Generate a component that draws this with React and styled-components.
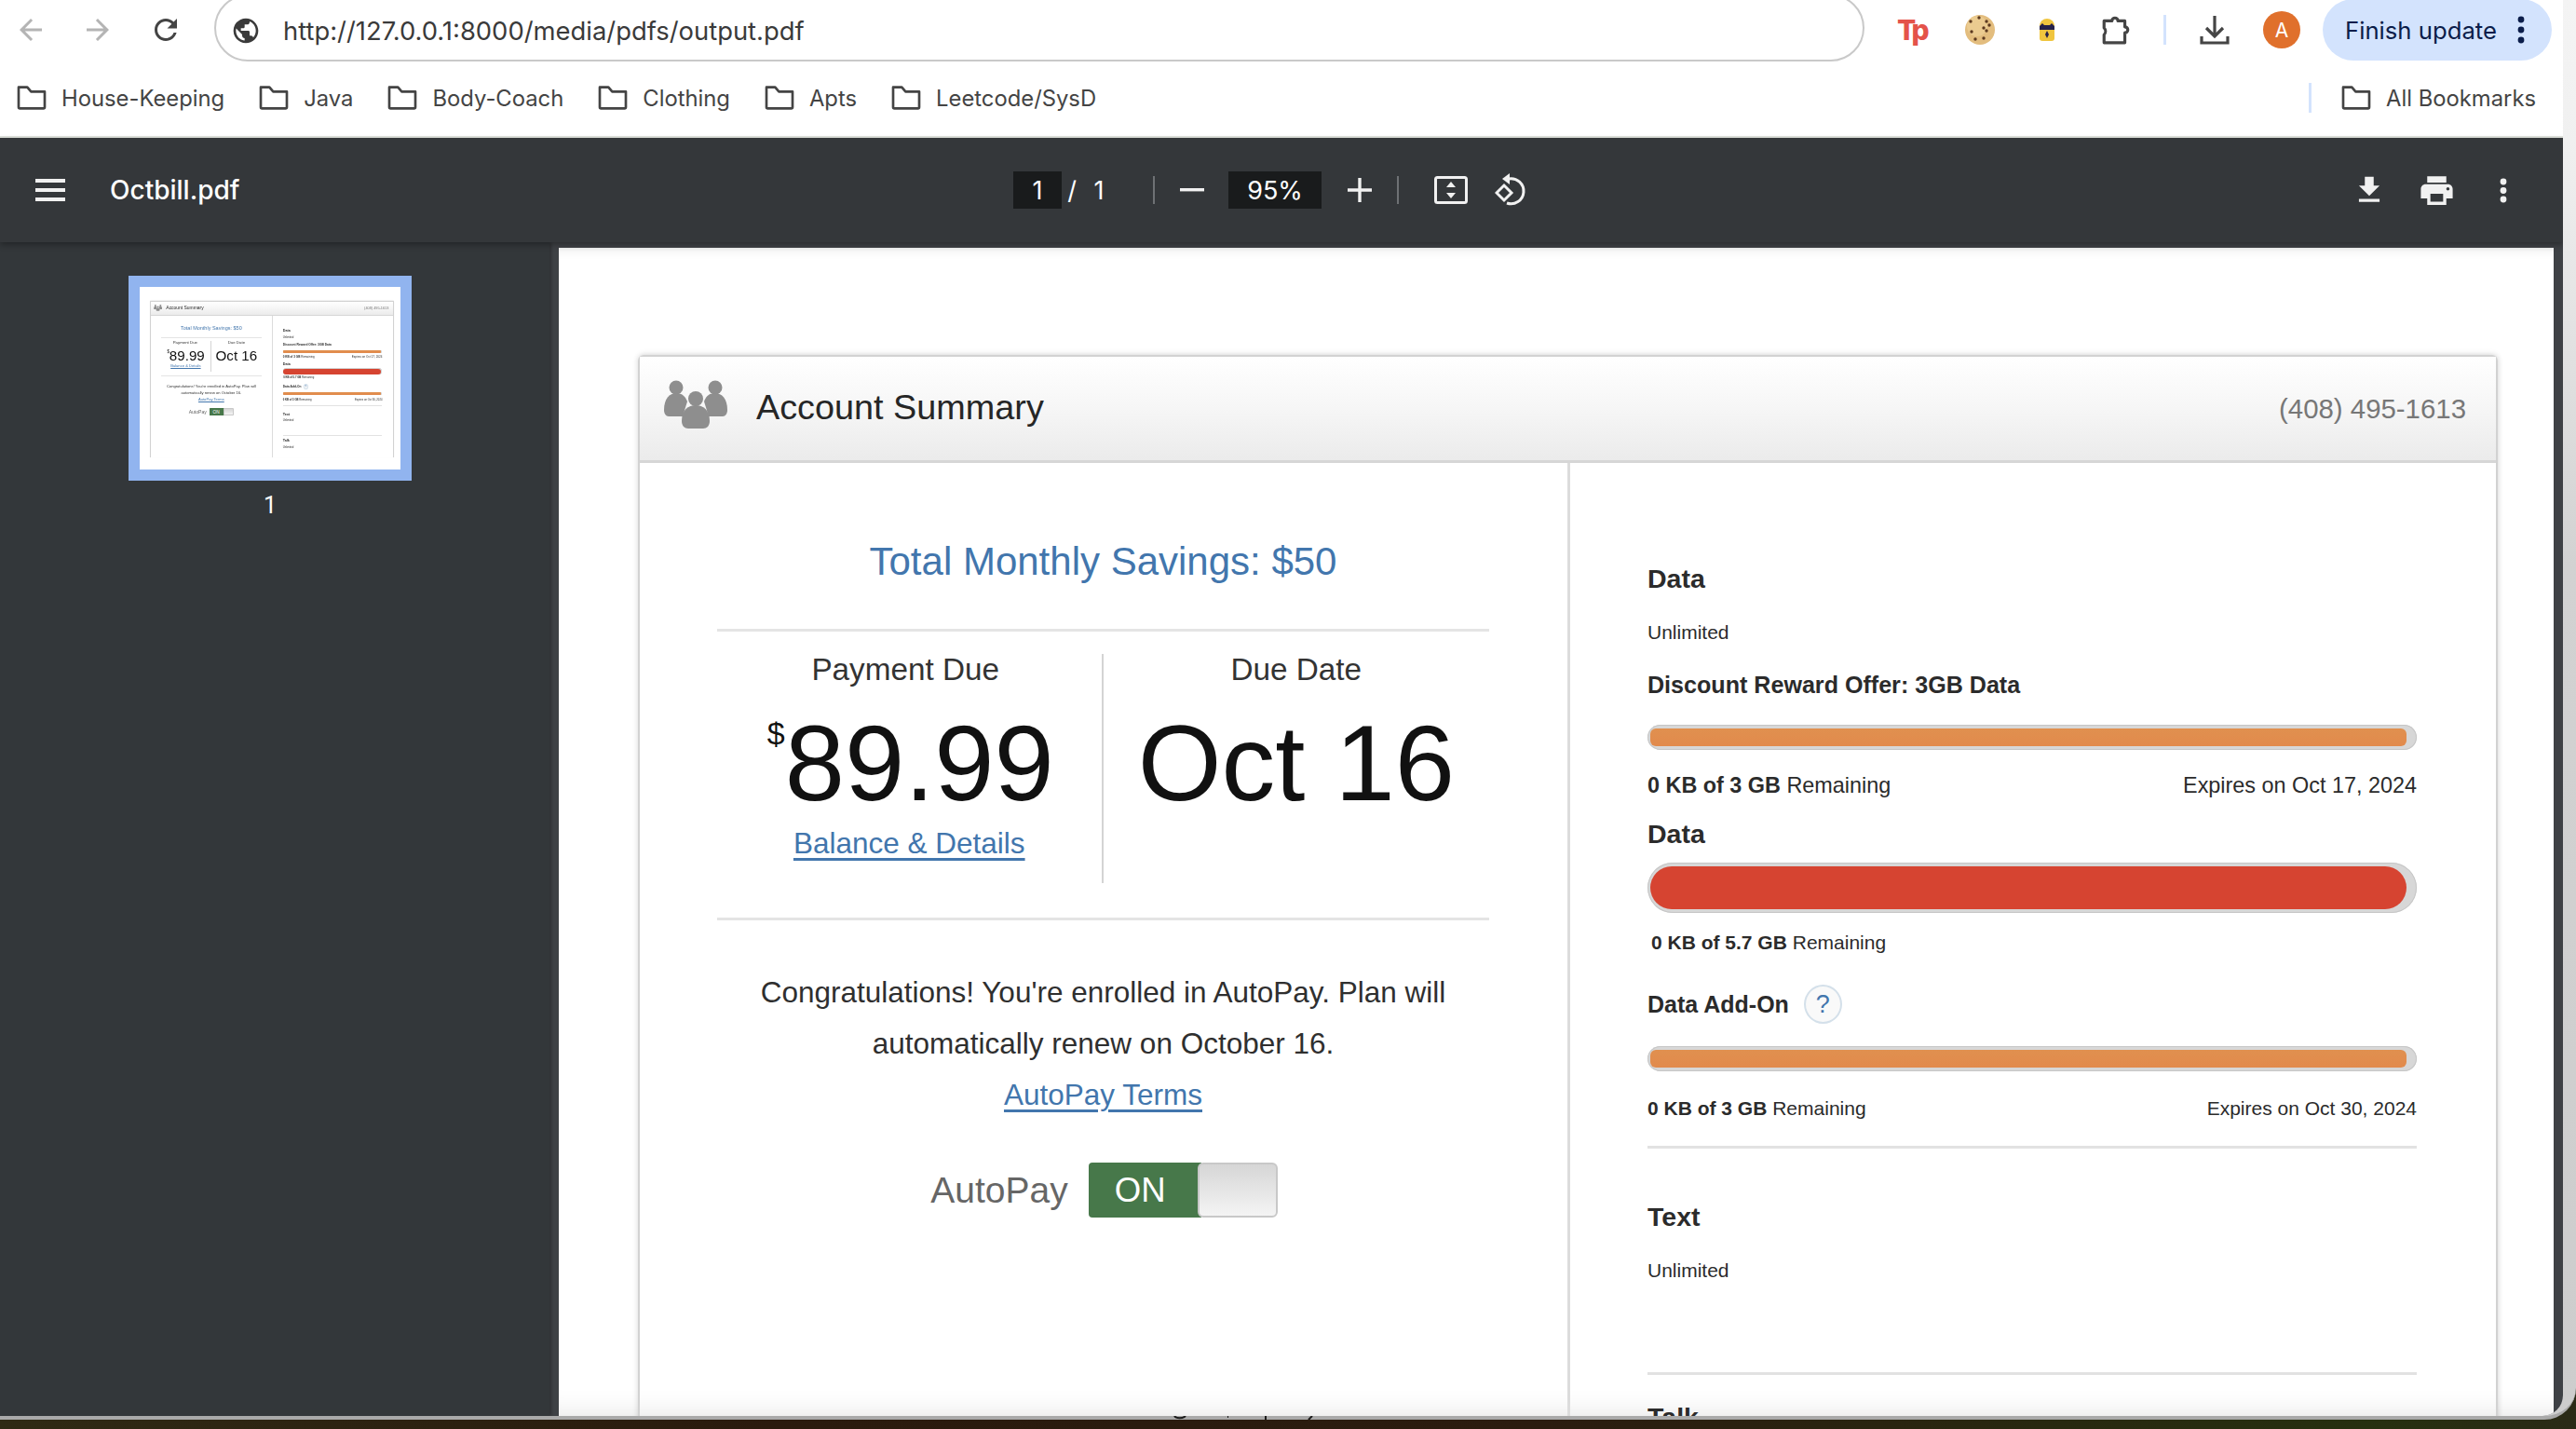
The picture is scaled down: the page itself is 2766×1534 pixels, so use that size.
import React from "react";
import styled, { createGlobalStyle } from "styled-components";

const GlobalStyle = createGlobalStyle`
  html, body {
    margin: 0;
    padding: 0;
    background: #241a10;
  }
  * {
    box-sizing: border-box;
  }
`;

const Screen = styled.div`
  width: 2766px;
  height: 1534px;
  overflow: hidden;
  background: linear-gradient(90deg, #2f2a14 0%, #2a1a0d 30%, #2b1c0f 60%, #26300f 92%, #2a2a16 100%);
`;

const Frame = styled.div`
  height: 1524px;
  padding-right: 14px;
  border-bottom: 4px solid #a9a9a9;
  border-bottom-right-radius: 34px;
  background: linear-gradient(180deg, #f4f4f4 0%, #f0f0f0 10%, #d2d2d2 40%, #cdcdcd 100%);
  overflow: hidden;
`;

const Window = styled.div`
  height: 1520px;
  display: flex;
  flex-direction: column;
  background: #fff;
  border-bottom-right-radius: 22px;
  overflow: hidden;
  font-family: Inter, "Liberation Sans", sans-serif;
`;

const TopBar = styled.div`
  height: 74px;
  flex: none;
  display: flex;
  align-items: center;
  padding-bottom: 10px;
  background: #fff;
`;

const NavButton = styled.div`
  width: 36px;
  height: 36px;
  flex: none;
  margin-left: ${(p) => p.$ml}px;
  color: ${(p) => p.$color};
`;

const Omnibox = styled.div`
  width: 1772px;
  height: 72px;
  margin: -4px 0 0 34px;
  padding: 6px 0 0 16px;
  flex: none;
  display: flex;
  align-items: center;
  gap: 24px;
  border: 2px solid #c9c9c9;
  border-radius: 38px;
  color: #3a3a3a;
`;

const UrlText = styled.span`
  font-size: 27.4px;
  white-space: nowrap;
`;

const ExtSlot = styled.div`
  flex: none;
  margin-left: ${(p) => p.$ml}px;
  display: flex;
  align-items: center;
  justify-content: center;
`;

const TpLogo = styled.span`
  display: block;
  width: 32px;
  font-size: 30px;
  line-height: 34px;
  font-weight: 800;
  letter-spacing: -3px;
  color: #e4534a;
`;

const VLine = styled.div`
  width: 3px;
  height: 32px;
  flex: none;
  margin-left: ${(p) => p.$ml}px;
  background: #d3e3fd;
`;

const Avatar = styled.div`
  width: 40px;
  height: 40px;
  flex: none;
  margin-left: 36px;
  border-radius: 50%;
  background: #e0702c;
  color: #fff;
  font-size: 21px;
  display: flex;
  align-items: center;
  justify-content: center;
`;

const UpdatePill = styled.div`
  width: 246px;
  height: 66px;
  flex: none;
  margin-left: 24px;
  padding-left: 24px;
  display: flex;
  align-items: center;
  gap: 22px;
  border-radius: 33px;
  background: #d3e3fd;
  color: #0b1d4a;
  font-size: 25.7px;
  white-space: nowrap;
`;

const BookmarkBar = styled.div`
  height: 74px;
  flex: none;
  display: flex;
  align-items: center;
  padding-left: 18px;
  padding-bottom: 10px;
  border-bottom: 2px solid #dfe2dc;
  background: #fff;
`;

const Bookmark = styled.div`
  display: flex;
  align-items: center;
  gap: 16px;
  margin-right: ${(p) => p.$mr || 37}px;
  font-size: 23.8px;
  color: #444;
  white-space: nowrap;
`;

const BookmarkSpacer = styled.div`
  flex: 1;
`;

const BookmarkEnd = styled.div`
  display: flex;
  align-items: center;
  gap: 32px;
`;

const ViewerBar = styled.div`
  height: 112px;
  flex: none;
  display: flex;
  align-items: center;
  background: #34373a;
  color: #fff;
  box-shadow: 0 3px 6px rgba(0, 0, 0, 0.3);
  position: relative;
  z-index: 2;
`;

const MenuBars = styled.div`
  width: 32px;
  height: 24px;
  margin-left: 38px;
  flex: none;
  border-top: 4px solid #f1f1f1;
  border-bottom: 4px solid #f1f1f1;
  display: flex;
  align-items: center;
  &::before {
    content: "";
    display: block;
    width: 100%;
    height: 4px;
    background: #f1f1f1;
  }
`;

const FileName = styled.div`
  width: 970px;
  margin-left: 48px;
  flex: none;
  font-weight: 500;
  font-size: 28px;
`;

const DarkBox = styled.div`
  width: ${(p) => p.$w}px;
  height: 40px;
  flex: none;
  margin-left: ${(p) => p.$ml || 0}px;
  display: flex;
  align-items: center;
  justify-content: center;
  background: #191b1c;
  font-size: 27px;
`;

const BarText = styled.span`
  flex: none;
  width: ${(p) => p.$w}px;
  margin-left: ${(p) => p.$ml}px;
  font-size: 27px;
  text-align: center;
`;

const BarDivider = styled.div`
  width: 2px;
  height: 30px;
  flex: none;
  margin-left: ${(p) => p.$ml}px;
  background: #6e7174;
`;

const BarIcon = styled.div`
  flex: none;
  display: flex;
  margin-left: ${(p) => p.$ml}px;
  color: #f1f1f1;
`;

const ViewerBody = styled.div`
  flex: 1;
  min-height: 0;
  display: flex;
  background: #3e4145;
`;

const Sidebar = styled.div`
  width: 590px;
  flex: none;
  padding: 36px 0 0 138px;
  background: #33373a;
  box-shadow: 2px 0 3px rgba(0, 0, 0, 0.25);
  color: #fff;
`;

const Thumb = styled.div`
  width: 304px;
  height: 220px;
  border: 12px solid #91b4ef;
  background: #fff;
  padding: 15px 8px 0 11px;
  overflow: hidden;
`;

const ThumbScale = styled.div`
  zoom: 0.131;
  filter: blur(3.5px);
`;

const ThumbLabel = styled.div`
  width: 304px;
  margin-top: 12px;
  text-align: center;
  font-family: Roboto, sans-serif;
  font-size: 25px;
  line-height: 30px;
`;

const Main = styled.div`
  flex: 1;
  min-width: 0;
  padding: 6px 10px 0;
`;

const Page = styled.div`
  height: 100%;
  padding: 115px 60px 0 85px;
  background: #fff;
  overflow: hidden;
  box-shadow: inset 0 14px 14px -14px rgba(0, 0, 0, 0.12), inset 0 -30px 30px -30px rgba(0, 0, 0, 0.12);
`;

const Card = styled.div`
  width: 1997px;
  height: 1285px;
  display: flex;
  flex-direction: column;
  border: 2px solid #d2d2d2;
  border-bottom: none;
  border-radius: 6px 6px 0 0;
  box-shadow: 0 -2px 6px rgba(0, 0, 0, 0.06), 2px 0 5px rgba(0, 0, 0, 0.07), -2px 0 5px rgba(0, 0, 0, 0.05);
  font-family: "Liberation Sans", Arial, sans-serif;
  color: #2b2b2b;
`;

const CardHeader = styled.div`
  height: 114px;
  flex: none;
  display: flex;
  align-items: center;
  padding: 0 32px 0 25px;
  border-bottom: 3px solid #d6d6d6;
  background: linear-gradient(180deg, #fff 0%, #f6f6f6 50%, #ebebeb 100%);
`;

const CardTitle = styled.div`
  flex: 1;
  margin: -2px 0 0 30px;
  font-size: 37.8px;
  color: #262626;
`;

const CardPhone = styled.div`
  font-size: 29.4px;
  color: #777;
`;

const CardBody = styled.div`
  flex: 1;
  display: flex;
`;

const LeftCol = styled.div`
  width: 999px;
  flex: none;
  padding: 0 84px 0 83px;
  border-right: 3px solid #dcdcdc;
`;

const Savings = styled.div`
  padding: 76px 0 42px;
  border-bottom: 3px solid #e4e4e4;
  font-size: 42px;
  line-height: 60px;
  text-align: center;
  color: #4276ad;
`;

const StatRow = styled.div`
  display: grid;
  grid-template-columns: 1fr 1fr;
  padding: 24px 0 37px;
  border-bottom: 3px solid #e4e4e4;
`;

const Stat = styled.div`
  height: 246px;
  text-align: center;
  ${(p) => p.$divided && "border-right: 2px solid #d4d4d4;"}
`;

const StatLabel = styled.div`
  padding-right: ${(p) => p.$pr || 0}px;
  font-size: 33.3px;
  line-height: 34px;
  color: #333;
`;

const StatValue = styled.div`
  margin-top: 23px;
  padding-left: ${(p) => p.$pl || 0}px;
  font-size: 115.5px;
  line-height: 120px;
  color: #111;
  white-space: nowrap;
`;

const Currency = styled.sup`
  font-size: 34px;
  line-height: 0;
  vertical-align: 60px;
`;

const TextLink = styled.a`
  color: #4276ad;
  text-decoration: underline;
  text-underline-offset: 5px;
`;

const DetailsLink = styled.div`
  margin-top: 6px;
  font-size: 31.5px;
  line-height: 40px;
`;

const Notice = styled.div`
  padding-top: 50px;
  font-size: 31.5px;
  line-height: 55px;
  text-align: center;
  color: #2f2f2f;
`;

const ToggleRow = styled.div`
  margin-top: 45px;
  padding-left: 2px;
  display: flex;
  align-items: center;
  justify-content: center;
  gap: 22px;
`;

const ToggleLabel = styled.span`
  font-size: 39px;
  color: #666;
`;

const Toggle = styled.div`
  width: 203px;
  height: 59px;
  display: flex;
  border-radius: 4px;
  overflow: hidden;
`;

const ToggleOn = styled.div`
  width: 121px;
  padding-left: 28px;
  display: flex;
  align-items: center;
  background: #47784a;
  color: #fff;
  font-size: 36.6px;
`;

const ToggleKnob = styled.div`
  flex: 1;
  margin-left: -4px;
  border: 2px solid #c8c8c8;
  border-radius: 6px;
  background: linear-gradient(180deg, #d6d6d6 0%, #f4f4f4 100%);
`;

const RightCol = styled.div`
  flex: 1;
  padding: 107px 85px 0 83px;
`;

const ItemTitle = styled.div`
  margin-top: ${(p) => p.$mt || 0}px;
  font-size: ${(p) => p.$size || 28.5}px;
  line-height: 34px;
  font-weight: 700;
  color: #2b2b2b;
`;

const ItemValue = styled.div`
  margin-top: 26px;
  font-size: 21px;
  line-height: 30px;
  color: #2b2b2b;
`;

const Meter = styled.div`
  height: ${(p) => p.$h}px;
  margin-top: ${(p) => p.$mt}px;
  padding: 4px 11px 4px 3px;
  border-radius: ${(p) => p.$h / 2}px;
  background: #d7d7d7;
  box-shadow: inset 0 0 0 1px #c6c6c6;
`;

const MeterFill = styled.div`
  height: 100%;
  border-radius: ${(p) => p.$round}px;
  background: ${(p) => p.$color};
`;

const MeterMeta = styled.div`
  margin-top: ${(p) => p.$mt}px;
  padding-left: ${(p) => p.$indent || 0}px;
  display: flex;
  justify-content: space-between;
  font-size: ${(p) => p.$size}px;
  line-height: 30px;
  color: #2b2b2b;
`;

const AddOnRow = styled.div`
  height: 42px;
  margin-top: 30px;
  display: flex;
  align-items: center;
  gap: 16px;
`;

const HelpDot = styled.div`
  width: 41px;
  height: 42px;
  display: flex;
  align-items: center;
  justify-content: center;
  border: 2px solid #d4e0ea;
  border-radius: 50%;
  background: #f9f9f9;
  color: #4276ad;
  font-size: 27px;
`;

const Rule = styled.div`
  height: 3px;
  margin-top: ${(p) => p.$mt}px;
  background: #e2e2e2;
`;

const BleedMarks = styled.svg`
  display: block;
  margin: -4px 0 0 1260px;
`;

const PeopleIcon = styled.svg`
  flex: none;
  margin-top: -10px;
  filter: blur(0.6px);
`;

const Icon = ({ d, size = 36 }) => (
  <svg width={size} height={size} viewBox="0 0 24 24" fill="currentColor">
    <path d={d} />
  </svg>
);

const Folder = () => (
  <svg width="32" height="32" viewBox="0 0 24 24" fill="none" stroke="#444" strokeWidth="2" strokeLinejoin="round">
    <path d="M1.5 3.5h7l3 3.5h11v12.5a1 1 0 0 1-1 1h-19a1 1 0 0 1-1-1z" />
  </svg>
);

const Cookie = () => (
  <svg width="32" height="32" viewBox="0 0 32 32">
    <circle cx="16" cy="16" r="16" fill="#e3bd7e" />
    <circle cx="13" cy="12" r="11" fill="#ebcb90" />
    {[[15, 3], [6, 7], [23, 7], [20, 14], [7, 18], [23, 17], [26, 11], [11, 26], [20, 25]].map(([x, y]) => (
      <circle key={`${x}-${y}`} cx={x} cy={y} r="1.7" fill="#5d3a20" />
    ))}
  </svg>
);

const Beetle = () => (
  <svg width="18" height="24" viewBox="0 0 18 24">
    <path d="M1 8a8 8 0 0 1 16 0v13a3 3 0 0 1-3 3H4a3 3 0 0 1-3-3z" fill="#f0c53e" />
    <path d="M1 8l3-3 2 2h6l2-2 3 3v4H1z" fill="#26224a" />
    <path d="M9 13l2 4-2 4-2-4z" fill="#26224a" />
  </svg>
);

const Puzzle = () => (
  <svg width="34" height="34" viewBox="0 0 32 32" fill="none" stroke="#454545" strokeWidth="3" strokeLinejoin="round">
    <path d="M4 7H12a3 3 0 0 1 6 0H25V13a3 3 0 0 1 0 6V29H4V21a5 5 0 0 0 0-7Z" />
  </svg>
);

const ChromeDownload = () => (
  <svg width="32" height="32" viewBox="0 0 32 32" fill="none" stroke="#454545" strokeWidth="3.2">
    <path d="M16 1v21M7 14l9 9 9-9M2 23v7h28v-7" />
  </svg>
);

const KebabDots = ({ color, size }) => (
  <svg width="8" height={size} viewBox={`0 0 8 ${size}`} fill={color}>
    <circle cx="4" cy="4" r="3.4" />
    <circle cx="4" cy={size / 2} r="3.4" />
    <circle cx="4" cy={size - 4} r="3.4" />
  </svg>
);

const FitPage = () => (
  <svg width="36" height="30" viewBox="0 0 36 30" fill="currentColor">
    <rect x="1.5" y="1.5" width="33" height="27" rx="2" fill="none" stroke="currentColor" strokeWidth="3" />
    <path d="M18 6l5 6H13zM18 24l-5-6h10z" />
  </svg>
);

const Rotate = () => (
  <svg width="36" height="36" viewBox="0 0 36 36" fill="none" stroke="currentColor" strokeWidth="3">
    <path d="M2 21l8-8 8 8-8 8z" />
    <path d="M15 6a13.5 13.5 0 1 1 -2 26" />
    <path d="M16 0l-8 6 8 6z" fill="currentColor" stroke="none" />
  </svg>
);

const People = () => (
  <PeopleIcon width="70" height="52" viewBox="0 0 70 52" fill="#8e8e8e">
    <circle cx="14" cy="8" r="7.5" />
    <path d="M1 32c0-12 6-18 13-18s10 4 12 9l-5 16H6c-3 0-5-3-5-7z" />
    <circle cx="56" cy="8" r="7.5" />
    <path d="M69 32c0-12-6-18-13-18s-10 4-12 9l5 16h15c3 0 5-3 5-7z" />
    <circle cx="35" cy="20" r="8" />
    <path d="M20 44c0-12 7-17 15-17s15 5 15 17c0 5-3 8-7 8H27c-4 0-7-3-7-8z" />
  </PeopleIcon>
);

const orange = "linear-gradient(180deg, #e0904f, #e28a4c)";

// the thumbnail shows the whole page, the main view is cut off at the Talk heading
const SummaryCard = ({ wholePage }) => (
  <Card>
    <CardHeader>
      <People />
      <CardTitle>Account Summary</CardTitle>
      <CardPhone>(408) 495-1613</CardPhone>
    </CardHeader>
    <CardBody>
      <LeftCol>
        <Savings>Total Monthly Savings: $50</Savings>
        <StatRow>
          <Stat $divided>
            <StatLabel $pr={8}>Payment Due</StatLabel>
            <StatValue $pl={3}>
              <Currency>$</Currency>89.99
            </StatValue>
            <DetailsLink>
              <TextLink>Balance &amp; Details</TextLink>
            </DetailsLink>
          </Stat>
          <Stat>
            <StatLabel>Due Date</StatLabel>
            <StatValue>Oct 16</StatValue>
          </Stat>
        </StatRow>
        <Notice>
          Congratulations! You're enrolled in AutoPay. Plan will
          <br />
          automatically renew on October 16.
          <br />
          <TextLink>AutoPay Terms</TextLink>
        </Notice>
        <ToggleRow>
          <ToggleLabel>AutoPay</ToggleLabel>
          <Toggle>
            <ToggleOn>ON</ToggleOn>
            <ToggleKnob />
          </Toggle>
        </ToggleRow>
      </LeftCol>
      <RightCol>
        <ItemTitle>Data</ItemTitle>
        <ItemValue>Unlimited</ItemValue>
        <ItemTitle $mt={24} $size={25.1}>
          Discount Reward Offer: 3GB Data
        </ItemTitle>
        <Meter $h={27} $mt={26}>
          <MeterFill $round={6} $color={orange} />
        </Meter>
        <MeterMeta $mt={23} $size={23.4}>
          <span>
            <b>0 KB of 3 GB</b> Remaining
          </span>
          <span>Expires on Oct 17, 2024</span>
        </MeterMeta>
        <ItemTitle $mt={20}>Data</ItemTitle>
        <Meter $h={54} $mt={14}>
          <MeterFill $round={23} $color="#d64431" />
        </Meter>
        <MeterMeta $mt={17} $size={21} $indent={4}>
          <span>
            <b>0 KB of 5.7 GB</b> Remaining
          </span>
        </MeterMeta>
        <AddOnRow>
          <ItemTitle $size={25}>Data Add-On</ItemTitle>
          <HelpDot>?</HelpDot>
        </AddOnRow>
        <Meter $h={27} $mt={24}>
          <MeterFill $round={6} $color={orange} />
        </Meter>
        <MeterMeta $mt={25} $size={21}>
          <span>
            <b>0 KB of 3 GB</b> Remaining
          </span>
          <span>Expires on Oct 30, 2024</span>
        </MeterMeta>
        <Rule $mt={25} />
        <ItemTitle $mt={56}>Text</ItemTitle>
        <ItemValue>Unlimited</ItemValue>
        <Rule $mt={94} />
        <ItemTitle $mt={28}>Talk</ItemTitle>
        {wholePage && <ItemValue>Unlimited</ItemValue>}
      </RightCol>
    </CardBody>
  </Card>
);

const bookmarks = ["House-Keeping", "Java", "Body-Coach", "Clothing", "Apts", "Leetcode/SysD"];

const App = () => (
  <Screen>
    <GlobalStyle />
    <Frame>
      <Window>
        <TopBar>
          <NavButton $ml={15} $color="#b4b4b4">
            <Icon d="M20 11H7.83l5.59-5.59L12 4l-8 8 8 8 1.41-1.41L7.83 13H20v-2z" />
          </NavButton>
          <NavButton $ml={36} $color="#b4b4b4">
            <Icon d="M12 4l-1.41 1.41L16.17 11H4v2h12.17l-5.58 5.59L12 20l8-8z" />
          </NavButton>
          <NavButton $ml={37} $color="#444">
            <Icon d="M17.65 6.35C16.2 4.9 14.21 4 12 4c-4.42 0-7.99 3.58-7.99 8s3.57 8 7.99 8c3.73 0 6.84-2.55 7.73-6h-2.08c-.82 2.33-3.04 4-5.65 4-3.31 0-6-2.69-6-6s2.69-6 6-6c1.66 0 3.14.69 4.22 1.78L13 11h7V4l-2.35 2.35z" />
          </NavButton>
          <Omnibox>
            <Icon size={32} d="M12 2C6.48 2 2 6.48 2 12s4.48 10 10 10 10-4.48 10-10S17.52 2 12 2zm-1 17.93c-3.95-.49-7-3.85-7-7.93 0-.62.08-1.21.21-1.79L9 15v1c0 1.1.9 2 2 2v1.93zm6.9-2.54c-.26-.81-1-1.39-1.9-1.39h-1v-3c0-.55-.45-1-1-1H8v-2h2c.55 0 1-.45 1-1V7h2c1.1 0 2-.9 2-2v-.41c2.93 1.19 5 4.06 5 7.41 0 2.08-.8 3.97-2.1 5.39z" />
            <UrlText>http://127.0.0.1:8000/media/pdfs/output.pdf</UrlText>
          </Omnibox>
          <ExtSlot $ml={35}>
            <TpLogo>Tp</TpLogo>
          </ExtSlot>
          <ExtSlot $ml={41}>
            <Cookie />
          </ExtSlot>
          <ExtSlot $ml={47}>
            <Beetle />
          </ExtSlot>
          <ExtSlot $ml={48}>
            <Puzzle />
          </ExtSlot>
          <VLine $ml={34} />
          <ExtSlot $ml={36}>
            <ChromeDownload />
          </ExtSlot>
          <Avatar>A</Avatar>
          <UpdatePill>
            Finish update
            <KebabDots color="#0b1d4a" size={30} />
          </UpdatePill>
        </TopBar>
        <BookmarkBar>
          {bookmarks.map((name) => (
            <Bookmark key={name}>
              <Folder />
              {name}
            </Bookmark>
          ))}
          <BookmarkSpacer />
          <BookmarkEnd>
            <VLine $ml={0} />
            <Bookmark $mr={29}>
              <Folder />
              All Bookmarks
            </Bookmark>
          </BookmarkEnd>
        </BookmarkBar>
        <ViewerBar>
          <MenuBars />
          <FileName>Octbill.pdf</FileName>
          <DarkBox $w={52}>1</DarkBox>
          <BarText $w={14} $ml={4}>/</BarText>
          <BarText $w={16} $ml={14}>1</BarText>
          <BarDivider $ml={50} />
          <BarIcon $ml={27}>
            <svg width="26" height="4" viewBox="0 0 26 4" fill="currentColor">
              <rect width="26" height="3.4" />
            </svg>
          </BarIcon>
          <DarkBox $w={100} $ml={26}>95%</DarkBox>
          <BarIcon $ml={28}>
            <svg width="26" height="26" viewBox="0 0 26 26" fill="currentColor">
              <path d="M11.3 0h3.4v11.3H26v3.4H14.7V26h-3.4V14.7H0v-3.4h11.3z" />
            </svg>
          </BarIcon>
          <BarDivider $ml={27} />
          <BarIcon $ml={38}>
            <FitPage />
          </BarIcon>
          <BarIcon $ml={29}>
            <Rotate />
          </BarIcon>
          <BarIcon $ml={884}>
            <Icon size={38} d="M19 9h-4V3H9v6H5l7 7 7-7zM5 18v2h14v-2H5z" />
          </BarIcon>
          <BarIcon $ml={33}>
            <Icon size={41} d="M19 8H5c-1.66 0-3 1.34-3 3v6h4v4h12v-4h4v-6c0-1.66-1.34-3-3-3zm-3 11H8v-5h8v5zm3-7c-.55 0-1-.45-1-1s.45-1 1-1 1 .45 1 1-.45 1-1 1zm-1-9H6v4h12V3z" />
          </BarIcon>
          <BarIcon $ml={47}>
            <KebabDots color="#f1f1f1" size={27} />
          </BarIcon>
        </ViewerBar>
        <ViewerBody>
          <Sidebar>
            <Thumb>
              <ThumbScale aria-hidden="true">
                <SummaryCard wholePage />
              </ThumbScale>
            </Thumb>
            <ThumbLabel>1</ThumbLabel>
          </Sidebar>
          <Main>
            <Page>
              <SummaryCard />
            </Page>
          </Main>
        </ViewerBody>
      </Window>
    </Frame>
    <BleedMarks width="160" height="4" viewBox="0 0 160 4" fill="none" stroke="#1c1c1c" strokeWidth="2">
      <path d="M1 0c2 3 9 3 12 0M58 1h1M99 0v4M145 4l4-4" />
    </BleedMarks>
  </Screen>
);

export default App;
